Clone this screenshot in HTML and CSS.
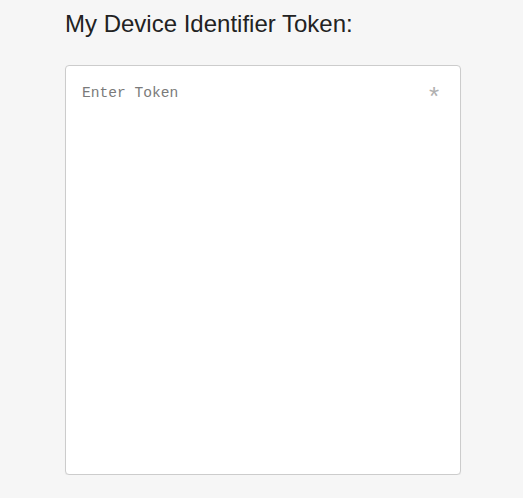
FILE: index.html
```html
<!DOCTYPE html>
<html>
<head>
<meta charset="utf-8">
<link rel="stylesheet" href="styles.css">
</head>
<body>
<div class="page">
  <h2 class="title">My Device Identifier Token:</h2>
  <div class="field">
    <textarea class="token" placeholder="Enter Token"></textarea>
    <span class="required">*</span>
  </div>
</div>
</body>
</html>
```

FILE: styles.css
```css
html, body {
  margin: 0;
  padding: 0;
  background: #f6f6f6;
}
.page {
  padding: 9px 0 0 65px;
  width: 396px;
}
.title {
  margin: 0;
  font-family: "Liberation Sans", Arial, sans-serif;
  font-weight: normal;
  font-size: 24px;
  line-height: 29px;
  color: #222;
}
.field {
  position: relative;
  margin-top: 27px;
}
.token {
  display: block;
  box-sizing: border-box;
  width: 396px;
  height: 410px;
  margin: 0;
  padding: 17px 16px;
  border: 1px solid #ccc;
  border-radius: 4px;
  background: #fff;
  resize: none;
  font-family: "Liberation Mono", "DejaVu Sans Mono", monospace;
  font-size: 14.6px;
  line-height: 20px;
  color: #333;
  outline: none;
  box-shadow: 0 1px 1px rgba(0,0,0,0.05);
}
.token::placeholder {
  color: #7a7a7a;
}
.required {
  position: absolute;
  top: 18px;
  right: 22px;
  font-family: "Liberation Sans", Arial, sans-serif;
  font-size: 26px;
  line-height: 26px;
  color: #b0b0b0;
}
```
